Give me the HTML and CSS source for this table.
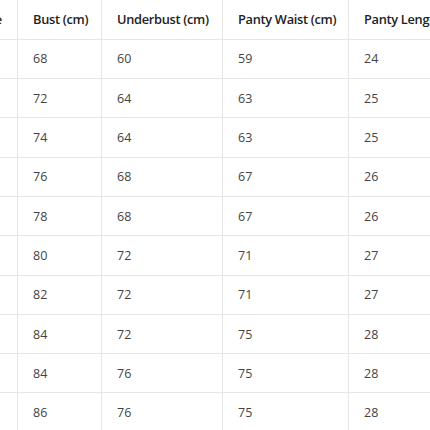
FILE: index.html
```html
<!DOCTYPE html>
<html>
<head>
<meta charset="utf-8">
<link rel="stylesheet" href="styles.css">
</head>
<body>
<div class="viewport">
<table class="sizes">
<thead>
<tr><th class="c0">Size</th><th class="c1">Bust (cm)</th><th class="c2">Underbust (cm)</th><th class="c3">Panty Waist (cm)</th><th class="c4">Panty Length (cm)</th></tr>
</thead>
<tbody>
<tr><td>S</td><td>68</td><td>60</td><td>59</td><td>24</td></tr>
<tr><td>S</td><td>72</td><td>64</td><td>63</td><td>25</td></tr>
<tr><td>M</td><td>74</td><td>64</td><td>63</td><td>25</td></tr>
<tr><td>M</td><td>76</td><td>68</td><td>67</td><td>26</td></tr>
<tr><td>L</td><td>78</td><td>68</td><td>67</td><td>26</td></tr>
<tr><td>L</td><td>80</td><td>72</td><td>71</td><td>27</td></tr>
<tr><td>XL</td><td>82</td><td>72</td><td>71</td><td>27</td></tr>
<tr><td>XL</td><td>84</td><td>72</td><td>75</td><td>28</td></tr>
<tr><td>XL</td><td>84</td><td>76</td><td>75</td><td>28</td></tr>
<tr><td>XL</td><td>86</td><td>76</td><td>75</td><td>28</td></tr>
</tbody>
</table>
</div>
</body>
</html>
```
FILE: styles.css
```css
html, body {
  margin: 0;
  padding: 0;
  background: #ffffff;
  overflow: hidden;
}
.viewport {
  width: 430px;
  height: 430px;
  overflow: hidden;
}
.sizes {
  border-collapse: collapse;
  table-layout: fixed;
  width: 600px;
  margin-left: -37px;
  font-family: "Open Sans", "Noto Sans", sans-serif;
  font-size: 12.5px;
  color: #444;
}
.sizes th, .sizes td {
  box-sizing: border-box;
  border: 1px solid #e6e6e6;
  padding: 0 15px;
  height: 39.3px;
  text-align: left;
  white-space: nowrap;
  overflow: hidden;
}
.sizes tr:first-child th { border-top: none; }
.sizes th {
  font-size: 12.8px;
  letter-spacing: -0.3px;
  font-weight: 600;
  color: #222;
}
.c0 { width: 54px; }
.c1 { width: 84px; }
.c2 { width: 121px; }
.c3 { width: 126px; }
.c4 { width: 215px; }
```
